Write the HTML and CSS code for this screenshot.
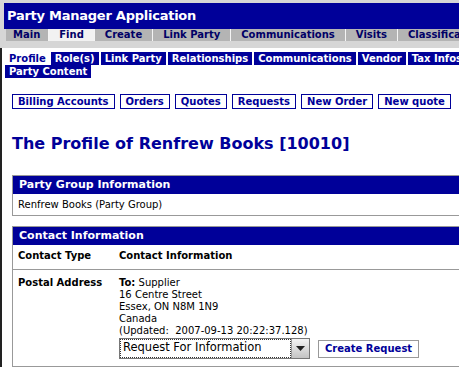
FILE: index.html
```html
<!DOCTYPE html>
<html lang="en">
<head>
    <meta charset="UTF-8">
    <title>Party Manager Application</title>
    <link rel="stylesheet" href="styles.css">
</head>
<body>
    <div class="page">
        <div class="app-header">
            <div class="app-title">Party Manager Application</div>
            <div class="app-tabs">
                <a class="app-tab">Main</a>
                <a class="app-tab selected">Find</a>
                <a class="app-tab">Create</a>
                <a class="app-tab">Link Party</a>
                <a class="app-tab">Communications</a>
                <a class="app-tab">Visits</a>
                <a class="app-tab">Classifications</a>
                <a class="app-tab">Security</a>
            </div>
        </div>

        <div class="content">
            <div class="sub-tabs">
                <a class="sub-tab selected">Profile</a>
                <a class="sub-tab">Role(s)</a>
                <a class="sub-tab">Link Party</a>
                <a class="sub-tab">Relationships</a>
                <a class="sub-tab">Communications</a>
                <a class="sub-tab">Vendor</a>
                <a class="sub-tab">Tax Infos</a>
                <a class="sub-tab">Party Content</a>
            </div>

            <div class="button-bar">
                <a class="button">Billing Accounts</a>
                <a class="button">Orders</a>
                <a class="button">Quotes</a>
                <a class="button">Requests</a>
                <a class="button">New Order</a>
                <a class="button">New quote</a>
            </div>

            <h1 class="page-title">The Profile of Renfrew Books [10010]</h1>

            <div class="box">
                <div class="box-head">Party Group Information</div>
                <div class="box-body">Renfrew Books (Party Group)</div>
            </div>

            <div class="box">
                <div class="box-head">Contact Information</div>
                <div class="contact-row header-row">
                    <div class="col-type">Contact Type</div>
                    <div class="col-info">Contact Information</div>
                </div>
                <div class="contact-row address-row">
                    <div class="col-type">Postal Address</div>
                    <div class="col-info">
                        <div><b>To:</b> Supplier</div>
                        <div>16 Centre Street</div>
                        <div>Essex, ON N8M 1N9</div>
                        <div>Canada</div>
                        <div>(Updated:&nbsp; 2007-09-13 20:22:37.128)</div>
                        <div class="request-line">
                            <div class="select">
                                <span class="select-value">Request For Information</span>
                                <span class="select-arrow">
                                    <svg width="9" height="6" viewBox="0 0 9 6"><path d="M0 0h9L4.5 5z" fill="#222"/></svg>
                                </span>
                            </div>
                            <a class="small-button">Create Request</a>
                        </div>
                    </div>
                </div>
            </div>
        </div>
    </div>
</body>
</html>
```

FILE: styles.css
```css
/* party manager profile */
body {
    margin: 0;
    font-family: 'DejaVu Sans', Verdana, sans-serif;
    font-size: 10px;
    color: #000;
    background: #fff;
}

.page {
    width: 100%;
    height: 368px;
    overflow: hidden;
}

.app-header {
    background: #d6d6d6;
    padding: 3px 0 7px 4px;
    width: 600px;
}

.app-title {
    background: #000099;
    color: #fff;
    font-size: 13px;
    letter-spacing: -0.25px;
    font-weight: bold;
    height: 26px;
    line-height: 26px;
    padding-left: 3px;
}

.app-tabs {
    display: flex;
    padding-left: 2px;
}

.app-tab {
    background: #b4b4b4;
    color: #000066;
    font-weight: bold;
    height: 12px;
    line-height: 12px;
    padding: 0 10px;
    white-space: nowrap;
}

.app-tab + .app-tab {
    border-left: 1px solid #f4f4f4;
}

.app-tab:first-child {
    padding: 0 8px 0 7px;
}

.app-tab.selected {
    background: #f2f2f2;
}

.content {
    border-left: 2px solid #222;
    padding: 4px 0 0 3px;
    width: 600px;
}

.sub-tabs {
    display: flex;
    flex-wrap: wrap;
    width: 500px;
    column-gap: 2px;
}

.sub-tab {
    background: #000099;
    color: #fff;
    font-weight: bold;
    height: 13px;
    line-height: 13px;
    padding: 0 4px;
    white-space: nowrap;
}

.sub-tab.selected {
    background: #fff;
    color: #000099;
    margin-right: -1px;
}

.button-bar {
    display: flex;
    gap: 5px;
    margin: 16px 0 0 7px;
}

.button {
    border: 1px solid #000099;
    color: #000099;
    font-weight: bold;
    height: 13px;
    line-height: 13px;
    padding: 0 5px;
    white-space: nowrap;
}

.page-title {
    color: #000099;
    font-size: 16px;
    margin: 25px 0 0 7px;
    line-height: 20px;
}

.box {
    border: 1px solid #999;
    border-right: none;
    margin: 21px 0 0 7px;
    width: 520px;
}

.box + .box {
    margin-top: 10px;
}

.box-head {
    background: #000099;
    color: #fff;
    font-size: 11px;
    font-weight: bold;
    height: 18px;
    line-height: 18px;
    padding-left: 6px;
}

.box-body {
    padding: 4px 5px;
    line-height: 13px;
}

.contact-row {
    display: flex;
    padding: 5px 5px 7px;
    line-height: 12px;
}

.header-row {
    border-bottom: 1px solid #999;
    font-weight: bold;
}

.address-row {
    padding-top: 7px;
}

.col-type {
    width: 101px;
    font-weight: bold;
}

.request-line {
    display: flex;
    align-items: center;
    gap: 8px;
    margin-top: 1px;
}

.select {
    display: flex;
    width: 189px;
    height: 19px;
    border: 1px solid #777;
    background: #fff;
}

.select-value {
    flex: 1;
    font-size: 11.5px;
    line-height: 17px;
    padding-left: 3px;
    outline: 1px dotted #333;
    outline-offset: -1px;
}

.select-arrow {
    width: 17px;
    display: flex;
    align-items: center;
    justify-content: center;
    background: linear-gradient(#f4f4f4, #c4c4c4);
    border-left: 1px solid #999;
}

.small-button {
    border: 1px solid #999;
    color: #000099;
    font-weight: bold;
    height: 16px;
    line-height: 16px;
    padding: 0 6px;
}
```
